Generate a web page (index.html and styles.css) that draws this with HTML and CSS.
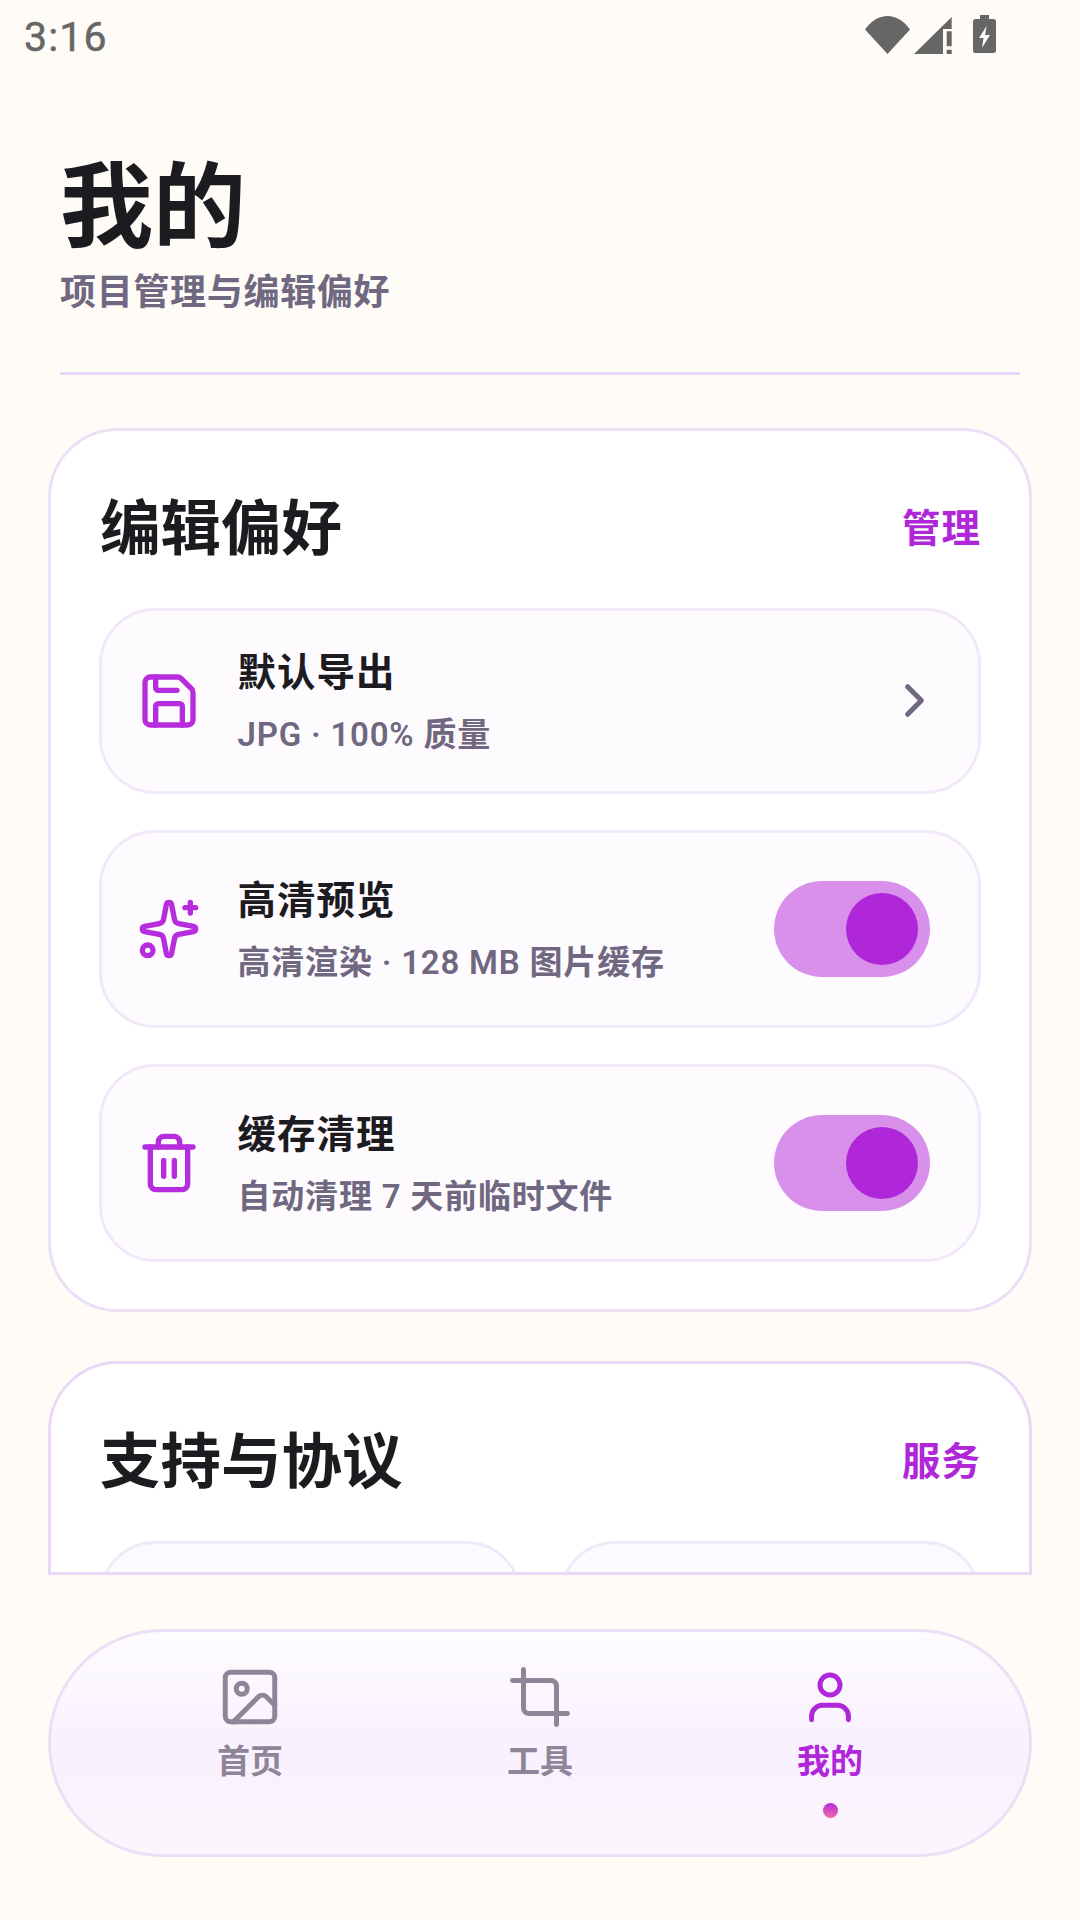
FILE: index.html
```html
<!DOCTYPE html>
<html lang="zh-CN">
<head>
<meta charset="utf-8">
<title>我的</title>
<link rel="stylesheet" href="styles.css">
</head>
<body>
<div class="app">
  <div class="status">
    <span class="clock">3:16</span>
    <div class="status-icons">
      <svg class="st-wifi" width="45" height="38" viewBox="0 0 45 38"><path d="M0 13.500C6 5 14 0 22.500 0S39 5 45 13.500L22.500 38z"/></svg>
      <svg class="st-signal" width="38" height="38" viewBox="0 0 38 38"><path d="M0 37 37.700 0V12H29V37z"/><path d="M32.700 14.300h5v15h-5zM32.700 32.700h5v4.300h-5z"/></svg>
      <svg class="st-batt" width="23" height="38" viewBox="0 0 23 38"><path fill-rule="evenodd" d="M7 0h9v4h4.500A2.500 2.500 0 0 1 23 6.500V35.500A2.500 2.500 0 0 1 20.500 38H2.500A2.500 2.500 0 0 1 0 35.500V6.500A2.500 2.500 0 0 1 2.500 4H7zM13.500 11 6 23h4.500L9 33l8-13h-4.800z"/></svg>
    </div>
  </div>

  <header class="head">
    <h1 class="page-title">我的</h1>
    <p class="page-sub">项目管理与编辑偏好</p>
    <div class="rule"></div>
  </header>

  <main class="main">
    <section class="card">
      <div class="card-head">
        <h2 class="card-title">编辑偏好</h2>
        <span class="card-link">管理</span>
      </div>
      <div class="rows">
        <div class="row">
          <svg class="ico" viewBox="0 0 24 24"><path d="M15.200 3a2 2 0 0 1 1.400.6l3.800 3.800a2 2 0 0 1 .6 1.400V19a2 2 0 0 1-2 2H5a2 2 0 0 1-2-2V5a2 2 0 0 1 2-2z"/><path d="M17 21v-7a1 1 0 0 0-1-1H8a1 1 0 0 0-1 1v7"/><path d="M7 3v4a1 1 0 0 0 1 1h7"/></svg>
          <div class="row-text">
            <div class="row-title">默认导出</div>
            <div class="row-sub">JPG · 100% 质量</div>
          </div>
          <svg class="chev" viewBox="0 0 24 24"><path d="m9 18 6-6-6-6"/></svg>
        </div>
        <div class="row">
          <svg class="ico" viewBox="0 0 24 24"><path d="M11.017 2.814a1 1 0 0 1 1.966 0l1.051 5.558a2 2 0 0 0 1.594 1.594l5.558 1.051a1 1 0 0 1 0 1.966l-5.558 1.051a2 2 0 0 0-1.594 1.594l-1.051 5.558a1 1 0 0 1-1.966 0l-1.051-5.558a2 2 0 0 0-1.594-1.594l-5.558-1.051a1 1 0 0 1 0-1.966l5.558-1.051a2 2 0 0 0 1.594-1.594z"/><path d="M20 2v4"/><path d="M22 4h-4"/><circle cx="4" cy="20" r="2"/></svg>
          <div class="row-text">
            <div class="row-title">高清预览</div>
            <div class="row-sub">高清渲染 · 128 MB 图片缓存</div>
          </div>
          <div class="switch"><span class="thumb"></span></div>
        </div>
        <div class="row">
          <svg class="ico" viewBox="0 0 24 24"><path d="M3 6h18"/><path d="M19 6v14c0 1-1 2-2 2H7c-1 0-2-1-2-2V6"/><path d="M8 6V4c0-1 1-2 2-2h4c1 0 2 1 2 2v2"/><path d="M10 11v6"/><path d="M14 11v6"/></svg>
          <div class="row-text">
            <div class="row-title">缓存清理</div>
            <div class="row-sub">自动清理 7 天前临时文件</div>
          </div>
          <div class="switch"><span class="thumb"></span></div>
        </div>
      </div>
    </section>

    <section class="card card-cut">
      <div class="card-head">
        <h2 class="card-title">支持与协议</h2>
        <span class="card-link">服务</span>
      </div>
      <div class="tiles">
        <div class="tile"></div>
        <div class="tile"></div>
      </div>
    </section>
  </main>

  <nav class="nav">
    <div class="nav-item">
      <svg class="nav-ico" viewBox="0 0 24 24"><rect x="3" y="3" width="18" height="18" rx="2"/><circle cx="9" cy="9" r="2"/><path d="m21 15-3.086-3.086a2 2 0 0 0-2.828 0L6 21"/></svg>
      <span class="nav-label">首页</span>
    </div>
    <div class="nav-item">
      <svg class="nav-ico" viewBox="0 0 24 24"><path d="M6 2v14a2 2 0 0 0 2 2h14"/><path d="M18 22V8a2 2 0 0 0-2-2H2"/></svg>
      <span class="nav-label">工具</span>
    </div>
    <div class="nav-item nav-item-on">
      <svg class="nav-ico" viewBox="0 0 24 24"><path d="M5.300 20.300v-1.300a4 4 0 0 1 4-4h5.400a4 4 0 0 1 4 4v1.300"/><circle cx="12" cy="7.640" r="3.640"/></svg>
      <span class="nav-label">我的</span>
      <span class="nav-dot"></span>
    </div>
  </nav>
</div>
</body>
</html>
```
FILE: styles.css
```css
* { box-sizing: border-box; }
html, body { margin: 0; padding: 0; }
body {
  width: 1080px;
  height: 1920px;
  overflow: hidden;
  background: #fffcf8;
  font-family: Roboto, "Noto Sans CJK SC", sans-serif;
  color: #1c1b1f;
}
.app { display: flex; flex-direction: column; height: 1920px; }

.status {
  height: 72px;
  display: flex;
  justify-content: space-between;
  padding: 15px 84px 0 24px;
  flex: none;
}
.clock { font-size: 41px; line-height: 44px; letter-spacing: 1.200px; color: #666; -webkit-text-stroke: 0.5px #666; }
.status-icons { display: flex; gap: 4px; height: 40px; align-items: flex-start; }
.status-icons svg { fill: #666; display: block; }
.st-wifi { margin-top: 1px; }
.st-signal { margin-top: 2px; }
.st-batt { margin-left: 17px; }

.head { margin: 0 60px; flex: none; }
.page-title {
  margin: 0;
  padding-top: 93px;
  font-size: 93px;
  line-height: 88px;
  font-weight: 700;
  color: #1c1b1f;
}
.page-sub {
  margin: 18px 0 0;
  font-size: 36px;
  line-height: 44px;
  letter-spacing: 0.7px;
  font-weight: 600;
  color: #6f6880;
}
.rule { height: 3px; background: #e8d5f5; margin-top: 57px; }

.main { flex: 1; min-height: 0; padding: 53px 48px 0; display: flex; flex-direction: column; gap: 49px; }

.card {
  background: #fff;
  border: 3px solid #ecdff6;
  border-radius: 70px;
  padding: 54px 48px 47px 48px;
  flex: none;
}
.card-cut {
  height: 214px;
  overflow: hidden;
  border-color: #ead8f5;
  border-radius: 70px 70px 0 0;
  padding-bottom: 0;
}
.card-head { display: flex; justify-content: space-between; align-items: center; height: 90px; margin-bottom: 33px; }
.card-title { margin: 0 0 0 1px; font-size: 60.500px; line-height: 90px; font-weight: 700; color: #1c1b1f; }
.card-link { margin-bottom: 2px; font-size: 38.500px; line-height: 50px; letter-spacing: 1px; font-weight: 700; color: #b026d9; }

.rows { display: flex; flex-direction: column; gap: 36px; }
.row {
  display: flex;
  align-items: center;
  background: #fefbff;
  border: 3px solid #f1e8fa;
  border-radius: 56px;
  padding: 37.500px 36px 37.500px 34px;
}
.ico {
  width: 64px;
  height: 64px;
  margin: 0 36.500px 0 1px;
  flex: none;
  fill: none;
  stroke: #b52ddd;
  stroke-width: 2;
  stroke-linecap: round;
  stroke-linejoin: round;
}
.row-text { flex: 1; min-width: 0; }
.row-title { font-size: 38.500px; line-height: 48px; letter-spacing: 1px; font-weight: 700; color: #1c1b1f; }
.row-sub { margin-top: 19px; font-size: 33px; line-height: 38px; letter-spacing: 0.8px; font-weight: 600; color: #6f6880; }
.chev {
  width: 55px;
  height: 55px;
  margin-bottom: 2px;
  flex: none;
  fill: none;
  stroke: #6f6880;
  stroke-width: 2.200;
  stroke-linecap: round;
  stroke-linejoin: round;
}
.switch {
  width: 156px;
  height: 96px;
  margin: 10.500px 12px 10.500px 0;
  padding: 12px;
  flex: none;
  display: flex;
  justify-content: flex-end;
  background: #d890ea;
  border-radius: 48px;
}
.thumb { width: 72px; height: 72px; border-radius: 50%; background: #b026d9; }

.tiles { display: grid; grid-template-columns: 1fr 1fr; gap: 37px; }
.tile { height: 200px; background: #fbfaff; border: 3px solid #f1e8fa; border-radius: 56px; }

.nav {
  flex: none;
  height: 228px;
  margin: 0 48px 63px;
  padding: 0 54px;
  display: flex;
  border: 3px solid #ecdff6;
  border-radius: 114px;
  background: linear-gradient(180deg, #fefcff 0%, #f8f1fe 50%, #fdf5fd 100%);
}
.nav-item { flex: 1; display: flex; flex-direction: column; align-items: center; padding-top: 32px; color: #8e8599; }
.nav-ico {
  width: 66px;
  height: 66px;
  fill: none;
  stroke: currentColor;
  stroke-width: 1.800;
  stroke-linecap: round;
  stroke-linejoin: round;
  flex: none;
}
.nav-label { margin-top: 12px; font-size: 33px; line-height: 40px; font-weight: 700; }
.nav-item-on { color: #b026d9; }
.nav-dot {
  width: 15px;
  height: 15px;
  margin-top: 21px;
  border-radius: 50%;
  background: linear-gradient(180deg, #b52ddd, #f06aa8);
}
```
